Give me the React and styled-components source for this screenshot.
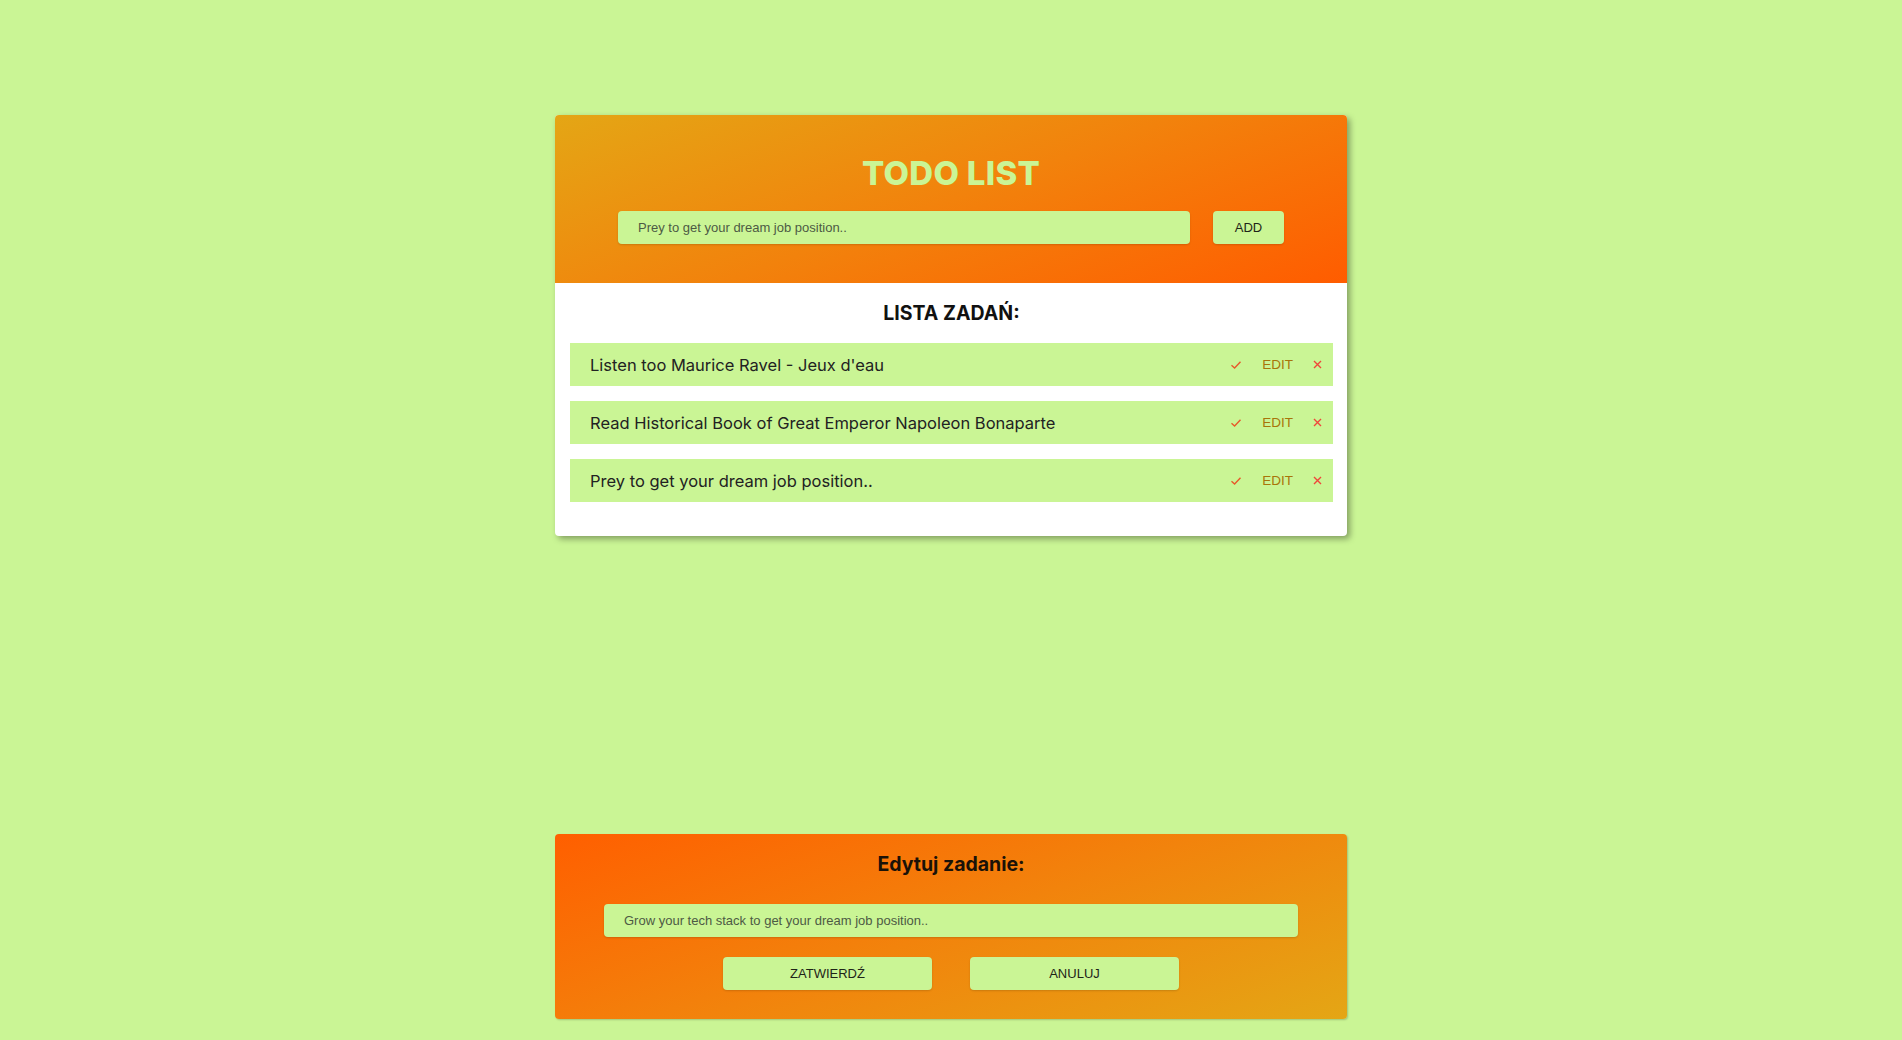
import React, { useState } from 'react';
import styled, { createGlobalStyle } from 'styled-components';

const GlobalStyle = createGlobalStyle`
  html, body {
    margin: 0;
    padding: 0;
    background: #caf595;
    font-family: Inter, "Noto Sans", sans-serif;
  }
`;

const Page = styled.div`
  min-height: 1040px;
  display: flex;
  flex-direction: column;
  align-items: center;
  padding-top: 115px;
  box-sizing: border-box;
`;

// glowna karta z lista
const Card = styled.div`
  width: 792px;
  border-radius: 4px;
  background: #fff;
  box-shadow: 3px 3px 6px rgba(0, 0, 0, 0.35);
  overflow: hidden;
`;

const Header = styled.header`
  height: 168px;
  box-sizing: border-box;
  padding-top: 37px;
  background: linear-gradient(160deg, #e4a615 0%, #f2820c 50%, #ff5c00 100%);
  display: flex;
  flex-direction: column;
  align-items: center;
`;

const Title = styled.h1`
  margin: 0;
  font-size: 33px;
  line-height: 42px;
  font-weight: 800;
  color: #caf595;
  letter-spacing: 0.3px;
`;

const InputRow = styled.div`
  display: flex;
  gap: 23px;
  margin-top: 17px;
`;

const TextInput = styled.input`
  width: ${p => p.$width}px;
  height: 33px;
  box-sizing: border-box;
  border: none;
  border-radius: 4px;
  background: #caf595;
  padding: 0 20px;
  font-family: "Liberation Sans", Arial, sans-serif;
  font-size: 13px;
  color: #333;
  outline: none;
  box-shadow: 0 1px 2px rgba(0, 0, 0, 0.15);

  &::placeholder {
    color: #4d5a44;
  }
`;

const Button = styled.button`
  width: ${p => p.$width}px;
  height: 33px;
  border: none;
  border-radius: 4px;
  background: #caf595;
  font-family: "Liberation Sans", Arial, sans-serif;
  font-size: 13px;
  color: #1e2418;
  cursor: pointer;
  box-shadow: 0 1px 2px rgba(0, 0, 0, 0.15);
`;

const Body = styled.main`
  padding: 15px 14px 34px 15px;
`;

const ListTitle = styled.h2`
  margin: 0 0 15px;
  text-align: center;
  font-size: 19.5px;
  line-height: 30px;
  font-weight: 700;
  color: #111;
`;

const List = styled.ul`
  list-style: none;
  margin: 0;
  padding: 0;
  display: flex;
  flex-direction: column;
  gap: 15px;
`;

const Task = styled.li`
  height: 43px;
  display: flex;
  align-items: center;
  background: #caf595;
  padding: 0 3px 0 20px;
`;

const TaskText = styled.span`
  flex: 1;
  font-size: 16.5px;
  color: #222;
`;

const Tool = styled.button`
  border: none;
  background: none;
  padding: 0 ${p => p.$pad || 8}px;
  font-family: "Liberation Sans", Arial, sans-serif;
  font-size: 13.5px;
  color: ${p => p.$color};
  cursor: pointer;
  display: flex;
  align-items: center;
`;

const EditPanel = styled.section`
  width: 792px;
  margin-top: 298px;
  box-sizing: border-box;
  padding: 17px 0 29px;
  border-radius: 4px;
  background: linear-gradient(160deg, #ff5f00 0%, #f2830c 50%, #e4a615 100%);
  box-shadow: 1px 1px 2px rgba(0, 0, 0, 0.2);
  display: flex;
  flex-direction: column;
  align-items: center;
`;

const EditTitle = styled.h3`
  margin: 0;
  font-size: 19.5px;
  line-height: 26px;
  font-weight: 700;
  color: #1a1208;
`;

const EditForm = styled.div`
  margin-top: 27px;
  display: flex;
  flex-direction: column;
  align-items: center;
  gap: 20px;
`;

const ButtonRow = styled.div`
  display: flex;
  gap: 38px;
`;

const Check = () => (
  <svg width="12" height="10" viewBox="0 0 12 10">
    <path d="M1.5 5.2 L4.6 8 L10.5 1.8" fill="none" stroke="#e8582a" strokeWidth="1.4" />
  </svg>
);

const Cross = () => (
  <svg width="9" height="9" viewBox="0 0 9 9">
    <path d="M1 1 L8 8 M8 1 L1 8" fill="none" stroke="#f0463a" strokeWidth="1.4" />
  </svg>
);

const tasks = [
  'Listen too Maurice Ravel - Jeux d\'eau',
  'Read Historical Book of Great Emperor Napoleon Bonaparte',
  'Prey to get your dream job position..',
];

export default function App() {
  const [text, setText] = useState('');

  return (
    <Page>
      <GlobalStyle />
      <Card>
        <Header>
          <Title>TODO LIST</Title>
          <InputRow>
            <TextInput
              $width={572}
              placeholder="Prey to get your dream job position.."
              value={text}
              onChange={e => setText(e.target.value)}
            />
            <Button $width={71}>ADD</Button>
          </InputRow>
        </Header>
        <Body>
          <ListTitle>LISTA ZADAŃ:</ListTitle>
          <List>
            {tasks.map(t => (
              <Task key={t}>
                <TaskText>{t}</TaskText>
                <Tool $color="#e8582a"><Check /></Tool>
                <Tool $color="#a8740a" $pad={12}>EDIT</Tool>
                <Tool $color="#f0463a"><Cross /></Tool>
              </Task>
            ))}
          </List>
        </Body>
      </Card>

      <EditPanel>
        <EditTitle>Edytuj zadanie:</EditTitle>
        <EditForm>
          <TextInput $width={694} placeholder="Grow your tech stack to get your dream job position.." />
          <ButtonRow>
            <Button $width={209}>ZATWIERDŹ</Button>
            <Button $width={209}>ANULUJ</Button>
          </ButtonRow>
        </EditForm>
      </EditPanel>
    </Page>
  );
}
